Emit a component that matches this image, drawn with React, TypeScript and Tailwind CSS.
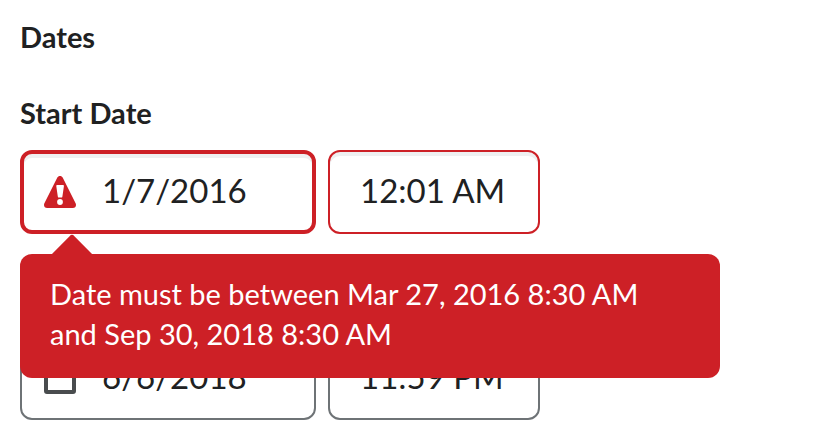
type FieldProps = {
  id: string;
  label: string;
  value: string;
  invalid?: boolean;
};

function AlertIcon() {
  return (
    <svg viewBox="0 0 32 32" className="h-8 w-8" aria-hidden="true">
      <path
        d="M13.2 1.8C14.3-.6 17.7-.6 18.8 1.8L31.6 27.2C32.7 29.6 31.4 32 28.8 32H3.2C.6 32-.7 29.6.4 27.2Z"
        fill="#cd2026"
      />
      <path
        d="M13.4 9H18.8C19.6 9 20 9.5 19.9 10.3L18.4 20.4C18.3 21.2 17.9 21.6 17.2 21.6H15C14.3 21.6 13.9 21.2 13.8 20.4L12.3 10.3C12.2 9.5 12.6 9 13.4 9Z"
        fill="#fff"
      />
      <circle cx="16" cy="26" r="2.9" fill="#fff" />
    </svg>
  );
}

function CalendarIcon() {
  return (
    <svg viewBox="0 0 32 32" className="h-8 w-8" fill="none" stroke="#494c4e" strokeWidth="4" aria-hidden="true">
      <rect x="2" y="5" width="28" height="25" rx="1" />
      <path d="M2 11H30M9 0V6M23 0V6" />
    </svg>
  );
}

function DateField({ id, label, value, invalid = false }: FieldProps) {
  const border = invalid ? "border-4 border-[#cd2026] pl-[78px]" : "border-2 border-[#6e7376] pl-20";
  return (
    <div className="relative w-[296px]">
      <input
        id={id}
        type="text"
        aria-label={label}
        aria-invalid={invalid}
        defaultValue={value}
        className={`block h-21 w-full rounded-xl bg-white pb-1 text-[33px] text-[#202122] shadow-[inset_0_4px_0_0_#eff0f1] outline-none ${border}`}
      />
      <span className="pointer-events-none absolute inset-y-0 left-6 flex items-center">
        {invalid ? <AlertIcon /> : <CalendarIcon />}
      </span>
    </div>
  );
}

function TimeField({ id, label, value, invalid = false }: FieldProps) {
  const border = invalid ? "border-[#cd2026]" : "border-[#6e7376]";
  return (
    <input
      id={id}
      type="text"
      aria-label={label}
      defaultValue={value}
      className={`block h-21 w-[212px] rounded-xl border-2 bg-white pb-1 pl-[30px] text-[33px] text-[#202122] shadow-[inset_0_4px_0_0_#eff0f1] outline-none ${border}`}
    />
  );
}

function ErrorTooltip() {
  return (
    <div role="alert" className="absolute top-full left-0 z-10 mt-5 w-[700px]">
      <svg
        viewBox="0 0 42 21"
        className="absolute -top-5 left-[31px] block h-[21px] w-[42px]"
        fill="#cd2026"
        aria-hidden="true"
      >
        <path d="M0 21L18.6 2.2Q21-.6 23.4 2.2L42 21Z" />
      </svg>
      <p className="rounded-xl bg-[#cd2026] px-[30px] pt-5 pb-6 text-[29px] leading-10 text-white">
        Date must be between Mar 27, 2016 8:30 AM
        <br />
        and Sep 30, 2018 8:30 AM
      </p>
    </div>
  );
}

export default function App() {
  return (
    <main className="bg-white px-5 py-[17px] font-['Lato',sans-serif] text-[#202122]">
      <h2 className="text-[29px] leading-10 font-bold">Dates</h2>
      <label htmlFor="start-date" className="mt-9 block text-[29px] leading-10 font-bold">
        Start Date
      </label>
      <div className="relative mt-[17px] flex gap-3">
        <DateField id="start-date" label="Start Date" value="1/7/2016" invalid />
        <TimeField id="start-time" label="Start Time" value="12:01 AM" invalid />
        <ErrorTooltip />
      </div>
      <div className="mt-[102px] flex gap-3">
        <DateField id="end-date" label="End Date" value="6/6/2018" />
        <TimeField id="end-time" label="End Time" value="11:59 PM" />
      </div>
    </main>
  );
}
